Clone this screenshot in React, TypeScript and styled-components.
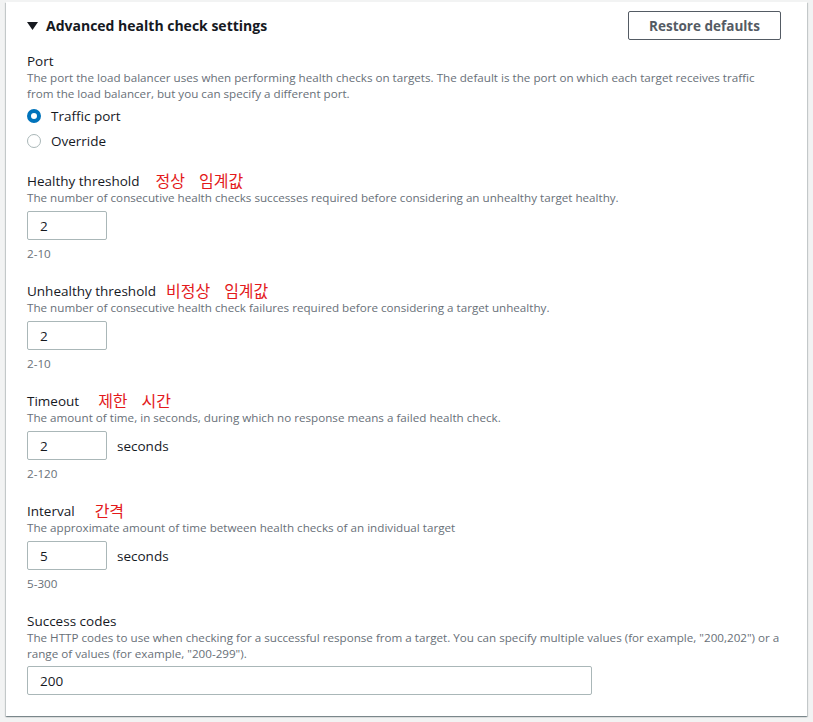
import styled, { createGlobalStyle } from "styled-components";

const GlobalStyle = createGlobalStyle`
  html, body {
    margin: 0;
    padding: 0;
    background: #f2f3f3;
    font-family: "Open Sans", "Noto Sans CJK KR", sans-serif;
    color: #16191f;
  }
`;

type Field = {
  label: string;
  note: string[];
  noteGap: number;
  desc: string;
  value: string;
  unit?: string;
  range: string;
};

const FIELDS: Field[] = [
  {
    label: "Healthy threshold",
    note: ["정상", "임계값"],
    noteGap: 16,
    desc: "The number of consecutive health checks successes required before considering an unhealthy target healthy.",
    value: "2",
    range: "2-10",
  },
  {
    label: "Unhealthy threshold",
    note: ["비정상", "임계값"],
    noteGap: 10,
    desc: "The number of consecutive health check failures required before considering a target unhealthy.",
    value: "2",
    range: "2-10",
  },
  {
    label: "Timeout",
    note: ["제한", "시간"],
    noteGap: 19,
    desc: "The amount of time, in seconds, during which no response means a failed health check.",
    value: "2",
    unit: "seconds",
    range: "2-120",
  },
  {
    label: "Interval",
    note: ["간격"],
    noteGap: 20,
    desc: "The approximate amount of time between health checks of an individual target",
    value: "5",
    unit: "seconds",
    range: "5-300",
  },
];

export default function App() {
  return (
    <>
      <GlobalStyle />
      <Page>
        <Panel>
          <Header>
            <Title>
              <Caret viewBox="0 0 11 8">
                <path d="M0 0 H11 L5.5 8 Z" fill="#16191f" />
              </Caret>
              Advanced health check settings
            </Title>
            <Button>Restore defaults</Button>
          </Header>

          <Section $gap={12}>
            <Label>Port</Label>
            <Desc $max={740}>
              The port the load balancer uses when performing health checks on
              targets. The default is the port on which each target receives
              traffic from the load balancer, but you can specify a different
              port.
            </Desc>
            <Radios>
              <RadioRow>
                <Radio $checked />
                Traffic port
              </RadioRow>
              <RadioRow>
                <Radio />
                Override
              </RadioRow>
            </Radios>
          </Section>

          {FIELDS.map((f, i) => (
            <Section key={f.label} $gap={i === 0 ? 21 : 20}>
              <Label>
                {f.label}
                <Note style={{ marginLeft: f.noteGap }}>
                  {f.note.map((w) => (
                    <span key={w}>{w}</span>
                  ))}
                </Note>
              </Label>
              <Desc>{f.desc}</Desc>
              <InputRow>
                <Input $width={80} defaultValue={f.value} />
                {f.unit && <Unit>{f.unit}</Unit>}
              </InputRow>
              <Range>{f.range}</Range>
            </Section>
          ))}

          <Section $gap={20}>
            <Label>Success codes</Label>
            <Desc>
              The HTTP codes to use when checking for a successful response from
              a target. You can specify multiple values (for example,
              "200,202") or a range of values (for example, "200-299").
            </Desc>
            <InputRow $top={4}>
              <Input $width={565} defaultValue="200" />
            </InputRow>
          </Section>
        </Panel>
      </Page>
    </>
  );
}

const Page = styled.div`
  padding: 2px 6px 6px 6px;
`;

const Panel = styled.div`
  width: 801px;
  box-sizing: border-box;
  background: #fff;
  padding: 9px 6px 21px 21px;
  box-shadow: 0 1px 1px 0 rgba(0, 28, 36, 0.3),
    1px 1px 1px 0 rgba(0, 28, 36, 0.15), -1px 1px 1px 0 rgba(0, 28, 36, 0.15);
`;

const Header = styled.div`
  display: flex;
  justify-content: space-between;
  align-items: center;
  height: 29px;
  padding-right: 20px;
`;

const Title = styled.h2`
  margin: 0;
  display: flex;
  align-items: center;
  gap: 8px;
  font-size: 14px;
  font-weight: 700;
  color: #16191f;
`;

const Caret = styled.svg`
  width: 11px;
  height: 8px;
`;

const Button = styled.button`
  width: 153px;
  height: 29px;
  box-sizing: border-box;
  background: #fff;
  border: 1px solid #545b64;
  border-radius: 2px;
  font-family: inherit;
  font-size: 13.5px;
  font-weight: 700;
  color: #545b64;
  padding: 0;
`;

const Section = styled.div<{ $gap: number }>`
  margin-top: ${(p) => p.$gap}px;
  display: flex;
  flex-direction: column;
`;

const Label = styled.div`
  font-size: 13.5px;
  line-height: 18px;
  color: #16191f;
  display: flex;
  align-items: center;
`;

const Note = styled.span`
  display: inline-flex;
  gap: 14px;
  font-family: "Noto Sans CJK KR", sans-serif;
  font-size: 16px;
  line-height: 18px;
  color: #e3191b;
  position: relative;
  top: -1px;
`;

const Desc = styled.div<{ $max?: number }>`
  font-size: 11.65px;
  line-height: 16px;
  color: #687078;
  max-width: ${(p) => p.$max ?? 780}px;
`;

const Radios = styled.div`
  margin-top: 4px;
  display: flex;
  flex-direction: column;
  gap: 5px;
`;

const RadioRow = styled.label`
  display: flex;
  align-items: center;
  gap: 10px;
  height: 20px;
  font-size: 13.5px;
  color: #16191f;
`;

const Radio = styled.span<{ $checked?: boolean }>`
  width: 14px;
  height: 14px;
  box-sizing: border-box;
  border-radius: 50%;
  border: ${(p) => (p.$checked ? "4px solid #0073bb" : "1px solid #aab7b8")};
  background: #fff;
`;

const InputRow = styled.div<{ $top?: number }>`
  margin-top: ${(p) => p.$top ?? 5}px;
  display: flex;
  align-items: center;
  gap: 10px;
`;

const Input = styled.input<{ $width: number }>`
  width: ${(p) => p.$width}px;
  height: 29px;
  box-sizing: border-box;
  border: 1px solid #aab7b8;
  border-radius: 2px;
  padding: 0 12px;
  font-family: inherit;
  font-size: 13.5px;
  color: #16191f;
  outline: none;
`;

const Unit = styled.span`
  font-size: 13.5px;
  color: #16191f;
`;

const Range = styled.div`
  margin-top: 6px;
  font-size: 11.65px;
  line-height: 16px;
  color: #687078;
`;
